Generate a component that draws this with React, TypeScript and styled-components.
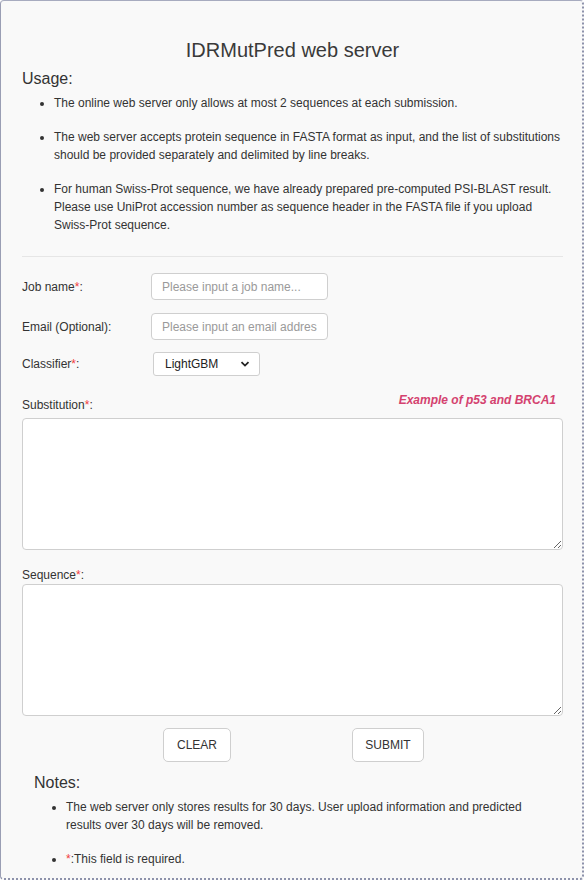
import React from "react";
import styled, { createGlobalStyle } from "styled-components";

const Global = createGlobalStyle`
  html, body { margin: 0; padding: 0; background: #ffffff; }
  body { font-family: "Liberation Sans", Arial, sans-serif; color: #333; }
  * { box-sizing: border-box; }
`;

const Card = styled.div`
  width: 584px;
  min-height: 880px;
  background: #f9f9f9;
  border: 1px solid #a7abbf;
  border-left-color: #9a9eb4;
  border-right: 2px dotted #8d92ab;
  border-bottom: 2px dotted #8d92ab;
  border-radius: 4px;
  padding: 37px 19px 10px 21px;
  display: flex;
  flex-direction: column;
`;

const Title = styled.h1`
  margin: 0;
  font-size: 20px;
  line-height: 24px;
  font-weight: 400;
  text-align: center;
  color: #3a3a3a;
`;

const Heading = styled.h2<{ $indent?: number; $top: number }>`
  margin: ${(p) => p.$top}px 0 0 ${(p) => p.$indent ?? 0}px;
  font-size: 16px;
  line-height: 20px;
  font-weight: 400;
  color: #333;
`;

const List = styled.ul<{ $indent?: number }>`
  margin: 5px 0 0 ${(p) => p.$indent ?? 0}px;
  padding-left: 32px;
  font-size: 12px;
  line-height: 18px;
  color: #333;
  li { margin-bottom: 16px; white-space: nowrap; }
  li:last-child { margin-bottom: 0; }
`;

const Rule = styled.hr`
  border: 0;
  border-top: 1px solid #e6e6e6;
  margin: 22px 0 16px 0;
`;

const Req = styled.span`
  color: #f23d3d;
`;

const FieldRow = styled.div<{ $gap?: number }>`
  display: flex;
  align-items: center;
  margin-top: ${(p) => p.$gap ?? 0}px;
`;

const Label = styled.label`
  width: 129px;
  font-size: 12px;
  line-height: 16px;
  color: #333;
`;

const TextInput = styled.input`
  width: 177px;
  height: 27px;
  border: 1px solid #cfcfcf;
  border-radius: 4px;
  background: #fff;
  padding: 0 10px;
  font-family: "Liberation Sans", Arial, sans-serif;
  font-size: 12px;
  color: #333;
  outline: none;
  &::placeholder { color: #9a9a9a; }
`;

const SelectWrap = styled.div`
  position: relative;
  margin-left: 2px;
  width: 107px;
  height: 24px;
`;

const Select = styled.select`
  appearance: none;
  width: 100%;
  height: 100%;
  border: 1px solid #cfcfcf;
  border-radius: 3px;
  background: #fff;
  padding: 0 0 0 11px;
  font-family: "Liberation Sans", Arial, sans-serif;
  font-size: 12px;
  color: #222;
  outline: none;
`;

const Chevron = styled.svg`
  position: absolute;
  right: 10px;
  top: 8px;
  width: 10px;
  height: 8px;
  pointer-events: none;
`;

const AreaHead = styled.div`
  display: flex;
  justify-content: space-between;
  margin-top: 15px;
`;

const AreaLabel = styled.label<{ $top?: number }>`
  display: block;
  margin-top: ${(p) => p.$top ?? 0}px;
  font-size: 12px;
  line-height: 18px;
  color: #333;
`;

const Example = styled.a`
  align-self: flex-start;
  margin-right: 7px;
  font-size: 12px;
  line-height: 18px;
  font-weight: 700;
  font-style: italic;
  color: #d4426f;
  text-decoration: none;
`;

const TextArea = styled.textarea<{ $top?: number }>`
  display: block;
  width: 541px;
  height: 132px;
  margin-top: ${(p) => p.$top ?? 0}px;
  border: 1px solid #cfcfcf;
  border-radius: 4px;
  background: #fff;
  font-family: "Liberation Sans", Arial, sans-serif;
  font-size: 12px;
  outline: none;
`;

const Buttons = styled.div`
  display: flex;
  gap: 121px;
  padding-left: 141px;
  margin-top: 12px;
`;

const Button = styled.button<{ $w: number }>`
  width: ${(p) => p.$w}px;
  height: 34px;
  border: 1px solid #cfcfcf;
  border-radius: 5px;
  background: #fff;
  font-family: "Liberation Sans", Arial, sans-serif;
  font-size: 12px;
  color: #333;
  text-transform: uppercase;
  padding: 0;
`;

export default function App() {
  return (
    <>
      <Global />
      <Card>
        <Title>IDRMutPred web server</Title>
        <Heading $top={7}>Usage:</Heading>
        <List>
          <li>The online web server only allows at most 2 sequences at each submission.</li>
          <li>
            The web server accepts protein sequence in FASTA format as input, and the list of substitutions
            <br />
            should be provided separately and delimited by line breaks.
          </li>
          <li>
            For human Swiss-Prot sequence, we have already prepared pre-computed PSI-BLAST result.
            <br />
            Please use UniProt accession number as sequence header in the FASTA file if you upload
            <br />
            Swiss-Prot sequence.
          </li>
        </List>
        <Rule />
        <FieldRow>
          <Label>
            Job name<Req>*</Req>:
          </Label>
          <TextInput placeholder="Please input a job name..." />
        </FieldRow>
        <FieldRow $gap={13}>
          <Label>Email (Optional):</Label>
          <TextInput placeholder="Please input an email address..." />
        </FieldRow>
        <FieldRow $gap={12}>
          <Label>
            Classifier<Req>*</Req>:
          </Label>
          <SelectWrap>
            <Select defaultValue="LightGBM">
              <option>LightGBM</option>
            </Select>
            <Chevron viewBox="0 0 10 8">
              <path d="M1.5 2.2 L5 5.6 L8.5 2.2" fill="none" stroke="#222" strokeWidth="1.8" />
            </Chevron>
          </SelectWrap>
        </FieldRow>
        <AreaHead>
          <AreaLabel $top={5}>
            Substitution<Req>*</Req>:
          </AreaLabel>
          <Example href="#">Example of p53 and BRCA1</Example>
        </AreaHead>
        <TextArea $top={4} />
        <AreaLabel $top={16}>
          Sequence<Req>*</Req>:
        </AreaLabel>
        <TextArea />
        <Buttons>
          <Button $w={68}>Clear</Button>
          <Button $w={72}>Submit</Button>
        </Buttons>
        <Heading $top={11} $indent={12}>
          Notes:
        </Heading>
        <List $indent={12}>
          <li>
            The web server only stores results for 30 days. User upload information and predicted
            <br />
            results over 30 days will be removed.
          </li>
          <li>
            <Req>*</Req>:This field is required.
          </li>
        </List>
      </Card>
    </>
  );
}
